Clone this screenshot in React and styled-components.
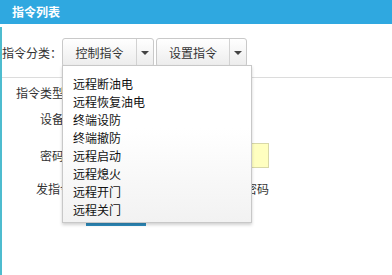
import React from 'react';
import styled, { createGlobalStyle } from 'styled-components';

const GlobalStyle = createGlobalStyle`
  html, body {
    margin: 0;
    padding: 0;
    background: #ffffff;
  }
  body {
    font-family: "Noto Sans CJK SC", "Liberation Sans", sans-serif;
    font-size: 12px;
    color: #333;
  }
`;

const commands = ['远程断油电', '远程恢复油电', '终端设防', '终端撤防', '远程启动', '远程熄火', '远程开门', '远程关门'];

function App() {
  return (
    <>
      <GlobalStyle />
      <Page>
        <Header>指令列表</Header>
        <Panel>
          <Toolbar>
            <ToolLabel>指令分类：</ToolLabel>
            <SplitButton>
              <MainPart $w={73}>控制指令</MainPart>
              <CaretPart><Caret /></CaretPart>
            </SplitButton>
            <SplitButton>
              <MainPart $w={72}>设置指令</MainPart>
              <CaretPart><Caret /></CaretPart>
            </SplitButton>
          </Toolbar>

          <Form>
            <Row $h={28}>
              <Label>指令类型：</Label>
            </Row>
            <Row $h={24}>
              <Label>设备：</Label>
            </Row>
            <Row $h={25} $mt={13}>
              <Label>密码：</Label>
              <YellowInput />
            </Row>
            <Row $h={24} $mt={8}>
              <Label $pr={2}>发指令：</Label>
              <Check>
                <input type="checkbox" />
                <span>显示密码</span>
              </Check>
            </Row>
            <Row $h={26}>
              <Label />
              <SendButton aria-label="发送" />
            </Row>
          </Form>

          <Menu>
            {commands.map((c) => (
              <MenuItem key={c}>{c}</MenuItem>
            ))}
          </Menu>
        </Panel>
      </Page>
    </>
  );
}

export default App;

const Page = styled.div`
  width: 392px;
  height: 275px;
  overflow: hidden;
`;

const Header = styled.div`
  height: 24px;
  line-height: 24px;
  padding-left: 12px;
  background: #2fa8e0;
  color: #fff;
  font-weight: bold;
  font-size: 12px;
`;

const Panel = styled.div`
  position: relative;
  margin-top: 3px;
  height: 248px;
  border-left: 2px solid #4dbccf;
`;

const Toolbar = styled.div`
  height: 51px;
  display: flex;
  align-items: center;
  border-bottom: 1px solid #dcdcdc;
  box-sizing: border-box;
  padding-top: 1px;
`;

const ToolLabel = styled.span`
  width: 60px;
  font-size: 12px;
  color: #333;
`;

const SplitButton = styled.div`
  display: flex;
  height: 29px;
  margin-right: 2px;
  border: 1px solid #c9c9c9;
  border-radius: 3px;
  background: linear-gradient(#ffffff, #ececec);
  box-sizing: border-box;
`;

const MainPart = styled.div`
  width: ${(p) => p.$w}px;
  display: flex;
  align-items: center;
  justify-content: center;
  color: #333;
  font-size: 12px;
  border-right: 1px solid #d2d2d2;
`;

const CaretPart = styled.div`
  width: 16px;
  display: flex;
  align-items: center;
  justify-content: center;
`;

const Caret = styled.span`
  width: 0;
  height: 0;
  border-left: 4px solid transparent;
  border-right: 4px solid transparent;
  border-top: 4px solid #444;
`;

const Form = styled.div`
  display: flex;
  flex-direction: column;
`;

const Row = styled.div`
  display: flex;
  align-items: center;
  height: ${(p) => p.$h}px;
  margin-top: ${(p) => p.$mt || 0}px;
`;

const Label = styled.span`
  width: ${(p) => 84 - (p.$pr ?? 10)}px;
  text-align: right;
  padding-right: ${(p) => p.$pr ?? 10}px;
  color: #333;
  font-size: 12px;
`;

const YellowInput = styled.input`
  width: 183px;
  height: 25px;
  box-sizing: border-box;
  border: 1px solid #d8d8a8;
  background: #ffffc0;
  outline: none;
`;

const Check = styled.label`
  display: flex;
  align-items: center;
  margin-left: 118px;
  font-size: 12px;
  color: #333;

  input {
    margin: 0 4px 0 0;
  }
`;

const SendButton = styled.button`
  width: 60px;
  height: 26px;
  border: none;
  background: #2e8cbd;
`;

const Menu = styled.div`
  position: absolute;
  left: 60px;
  top: 38px;
  width: 190px;
  height: 158px;
  box-sizing: border-box;
  padding: 9px 0 0 10px;
  border: 1px solid #c8c8c8;
  background: linear-gradient(#ffffff 40%, #f2f2f2);
  box-shadow: 0 2px 3px rgba(0, 0, 0, 0.18);
`;

const MenuItem = styled.div`
  height: 18px;
  line-height: 18px;
  font-size: 12px;
  color: #111;
`;
